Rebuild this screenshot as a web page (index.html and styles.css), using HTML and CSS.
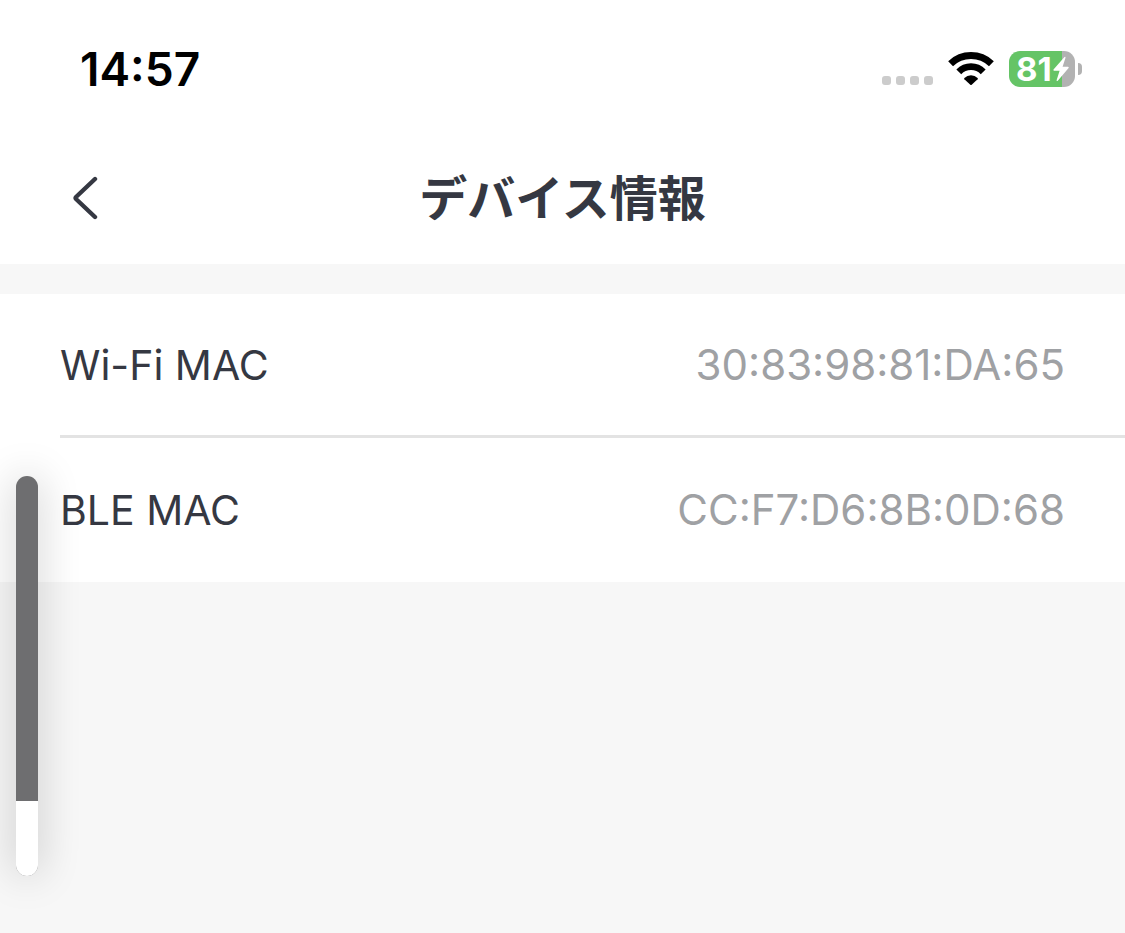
FILE: index.html
```
<!DOCTYPE html>
<html lang="ja">
<head>
  <meta charset="UTF-8" />
  <meta name="viewport" content="width=device-width, initial-scale=1.0"/>
  <title>デバイス情報</title>
  <link rel="stylesheet" href="styles.css">
</head>
<body>
  <div class="status-bar">
    <div class="time">14:57</div>
    <div class="status-icons">
      <div class="signal">
        <span></span><span></span><span></span><span></span>
      </div>
      <svg class="wifi" viewBox="0 0 46 34" aria-hidden="true">
        <path d="M2.6 11.8A29.5 29.5 0 0 1 43.4 11.8" fill="none" stroke="#000" stroke-width="7"/>
        <path d="M10.8 19.8A17 17 0 0 1 35.2 19.8" fill="none" stroke="#000" stroke-width="6.8"/>
        <path d="M22.3 32.8L16.4 27.2Q15.8 26.6 16.4 26A9.6 9.6 0 0 1 29.6 26Q30.2 26.6 29.6 27.2L23.7 32.8Q23 33.4 22.3 32.8Z"/>
      </svg>
      <div class="battery">
        <div class="battery-body">
          <span class="battery-level">81</span>
          <svg class="bolt" viewBox="0 0 18 26" aria-hidden="true">
            <path d="M12.5 1L1.5 13.6Q1 14.6 2 14.8H7.6L4.6 24.2Q4.6 25.6 5.8 24.8L16.6 12Q17.2 11 16 10.8H10.6L13.5 1.8Q13.6 0.2 12.5 1Z" fill="#fff"/>
          </svg>
        </div>
        <div class="battery-cap"></div>
      </div>
    </div>
  </div>

  <header class="header">
    <button class="back" type="button" aria-label="戻る">
      <svg viewBox="0 0 26 44" fill="none" aria-hidden="true">
        <path d="M23 3L4 21Q3 22 4 23L23 41" stroke="currentColor" stroke-width="4.4" stroke-linecap="round" stroke-linejoin="round"/>
      </svg>
    </button>
    <h1>デバイス情報</h1>
  </header>

  <main>
    <dl class="info-list">
      <div class="info-row">
        <dt>Wi-Fi MAC</dt>
        <dd>30:83:98:81:DA:65</dd>
      </div>
      <div class="info-row">
        <dt>BLE MAC</dt>
        <dd>CC:F7:D6:8B:0D:68</dd>
      </div>
    </dl>
  </main>

  <div class="volume">
    <div class="volume-empty"></div>
  </div>
</body>
</html>
```
FILE: styles.css
```
:root {
  --text: #353842;
  --text-light: #9fa1a4;
  --background: #f7f7f7;
  --surface: #ffffff;
  --border: #e3e3e3;
  --charge: #65c466;
}

* {
  box-sizing: border-box;
  margin: 0;
  padding: 0;
}

body {
  font-family: Inter, "Noto Sans CJK JP", sans-serif;
  font-size: 42px;
  line-height: 50px;
  min-height: 100vh;
  background-color: var(--background);
  color: var(--text);
}

.status-bar {
  display: flex;
  align-items: center;
  justify-content: space-between;
  height: 132px;
  padding: 6px 43px 0 80px;
  background-color: var(--surface);
}

.time {
  font-size: 46px;
  font-weight: 600;
  color: #000;
}

.status-icons {
  display: flex;
  align-items: center;
  gap: 15px;
}

.signal {
  display: flex;
  align-items: flex-end;
  gap: 5px;
  height: 32px;
}

.signal span {
  width: 9px;
  height: 9px;
  border-radius: 3px;
  background-color: #cccccc;
}

.wifi {
  width: 46px;
  height: 34px;
}

.battery {
  display: flex;
  align-items: center;
  gap: 3px;
}

.battery-body {
  display: flex;
  align-items: center;
  width: 66px;
  height: 36px;
  padding-left: 7px;
  border-radius: 11px;
  background: linear-gradient(to right, var(--charge) 80%, #b2b2b2 80%);
}

.battery-level {
  font-size: 33px;
  font-weight: 700;
  line-height: 36px;
  color: #fff;
}

.bolt {
  width: 18px;
  height: 26px;
}

.battery-cap {
  width: 4px;
  height: 12px;
  border-radius: 0 4px 4px 0;
  background-color: #b2b2b2;
}

.header {
  display: grid;
  grid-template-columns: 60px 1fr 60px;
  align-items: center;
  height: 132px;
  padding: 0 60px;
  background-color: var(--surface);
}

.back {
  display: flex;
  align-items: center;
  height: 60px;
  padding-left: 12px;
  border: none;
  background: none;
  color: var(--text);
  cursor: pointer;
}

.back svg {
  width: 26px;
  height: 44px;
}

h1 {
  padding-bottom: 6px;
  font-family: "Noto Sans CJK JP", sans-serif;
  font-size: 48px;
  font-weight: 700;
  line-height: 72px;
  text-align: center;
}

.info-list {
  margin-top: 30px;
  padding-left: 60px;
  background-color: var(--surface);
}

.info-row {
  display: flex;
  align-items: center;
  justify-content: space-between;
  height: 144px;
  padding-right: 60px;
}

.info-row:not(:last-child) {
  border-bottom: 3px solid var(--border);
}

.info-row dt {
  font-size: 41px;
}

.info-row dd {
  color: var(--text-light);
}

/* volume indicator floating over the page */
.volume {
  position: fixed;
  top: 476px;
  left: 16px;
  display: flex;
  flex-direction: column;
  justify-content: flex-end;
  width: 22px;
  height: 400px;
  border-radius: 11px;
  background-color: #6e6e70;
  box-shadow: 0 0 40px rgba(0, 0, 0, 0.22);
  overflow: hidden;
}

.volume-empty {
  height: 75px;
  background-color: #fff;
}
```
